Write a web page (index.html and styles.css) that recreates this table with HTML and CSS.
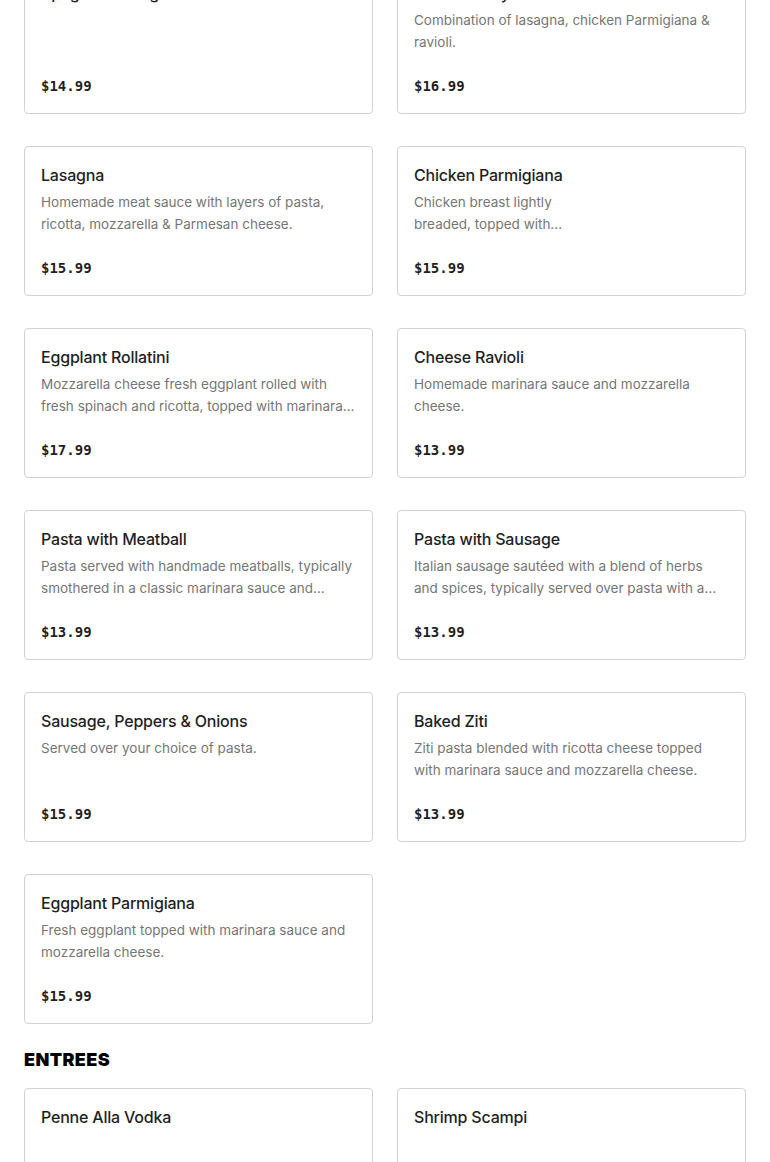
FILE: index.html
```html
<!DOCTYPE html>
<html lang="en">
<head>
<meta charset="utf-8">
<title>Menu</title>
<link rel="stylesheet" href="styles.css">
</head>
<body>
<main class="menu">
  <section class="section first">
    <div class="grid">
      <div class="card">
        <h3 class="name">Spaghetti Bolognese</h3>
        <p class="desc"></p>
        <div class="price">$14.99</div>
      </div>
      <div class="card">
        <h3 class="name">Taste of Italy</h3>
        <p class="desc">Combination of lasagna, chicken Parmigiana &amp; ravioli.</p>
        <div class="price">$16.99</div>
      </div>
      <div class="card">
        <h3 class="name">Lasagna</h3>
        <p class="desc">Homemade meat sauce with layers of pasta, ricotta, mozzarella &amp; Parmesan cheese.</p>
        <div class="price">$15.99</div>
      </div>
      <div class="card">
        <h3 class="name">Chicken Parmigiana</h3>
        <p class="desc">Chicken breast lightly<br>breaded, topped with...</p>
        <div class="price">$15.99</div>
      </div>
      <div class="card">
        <h3 class="name">Eggplant Rollatini</h3>
        <p class="desc">Mozzarella cheese fresh eggplant rolled with fresh spinach and ricotta, topped with marinara sauce and baked.</p>
        <div class="price">$17.99</div>
      </div>
      <div class="card">
        <h3 class="name">Cheese Ravioli</h3>
        <p class="desc">Homemade marinara sauce and mozzarella cheese.</p>
        <div class="price">$13.99</div>
      </div>
      <div class="card">
        <h3 class="name">Pasta with Meatball</h3>
        <p class="desc">Pasta served with handmade meatballs, typically smothered in a classic marinara sauce and topped with cheese.</p>
        <div class="price">$13.99</div>
      </div>
      <div class="card">
        <h3 class="name">Pasta with Sausage</h3>
        <p class="desc">Italian sausage sautéed with a blend of herbs and spices, typically served over pasta with a marinara sauce.</p>
        <div class="price">$13.99</div>
      </div>
      <div class="card">
        <h3 class="name">Sausage, Peppers &amp; Onions</h3>
        <p class="desc">Served over your choice of pasta.</p>
        <div class="price">$15.99</div>
      </div>
      <div class="card">
        <h3 class="name">Baked Ziti</h3>
        <p class="desc">Ziti pasta blended with ricotta cheese topped with marinara sauce and mozzarella cheese.</p>
        <div class="price">$13.99</div>
      </div>
      <div class="card">
        <h3 class="name">Eggplant Parmigiana</h3>
        <p class="desc">Fresh eggplant topped with marinara sauce and mozzarella cheese.</p>
        <div class="price">$15.99</div>
      </div>
    </div>
  </section>
  <section class="section">
    <h2 class="heading">ENTREES</h2>
    <div class="grid">
      <div class="card">
        <h3 class="name">Penne Alla Vodka</h3>
        <p class="desc"></p>
        <div class="price">$15.99</div>
      </div>
      <div class="card">
        <h3 class="name">Shrimp Scampi</h3>
        <p class="desc"></p>
        <div class="price">$19.99</div>
      </div>
    </div>
  </section>
</main>
</body>
</html>
```

FILE: styles.css
```css
html, body {
  margin: 0;
  padding: 0;
  background: #ffffff;
}

body {
  font-family: Inter, "Noto Sans", sans-serif;
  color: #191919;
}

.menu {
  padding: 0 24px;
}

.section.first {
  margin-top: -36px;
}

.heading {
  margin: 24px 0 16px;
  font-family: Inter, sans-serif;
  font-weight: 900;
  font-size: 18px;
  line-height: 24px;
  letter-spacing: 0.4px;
  color: #000;
}

.grid {
  display: grid;
  grid-template-columns: 1fr 1fr;
  column-gap: 24px;
  row-gap: 32px;
}

.card {
  height: 150px;
  box-sizing: border-box;
  border: 1px solid #d2d2d2;
  border-radius: 4px;
  padding: 16px 16px 17px;
  display: flex;
  flex-direction: column;
}

.name {
  margin: 0 0 4px;
  font-size: 16px;
  font-weight: 500;
  line-height: 24px;
  color: #1f1f1f;
  letter-spacing: -0.2px;
}

.desc {
  margin: 0;
  font-size: 13.5px;
  line-height: 22px;
  color: #767676;
  display: -webkit-box;
  -webkit-line-clamp: 2;
  -webkit-box-orient: vertical;
  overflow: hidden;
}

.price {
  margin-top: auto;
  font-family: "DejaVu Sans Mono", "Liberation Mono", monospace;
  font-weight: bold;
  font-size: 14px;
  line-height: 20px;
  color: #1f1f1f;
}
```
